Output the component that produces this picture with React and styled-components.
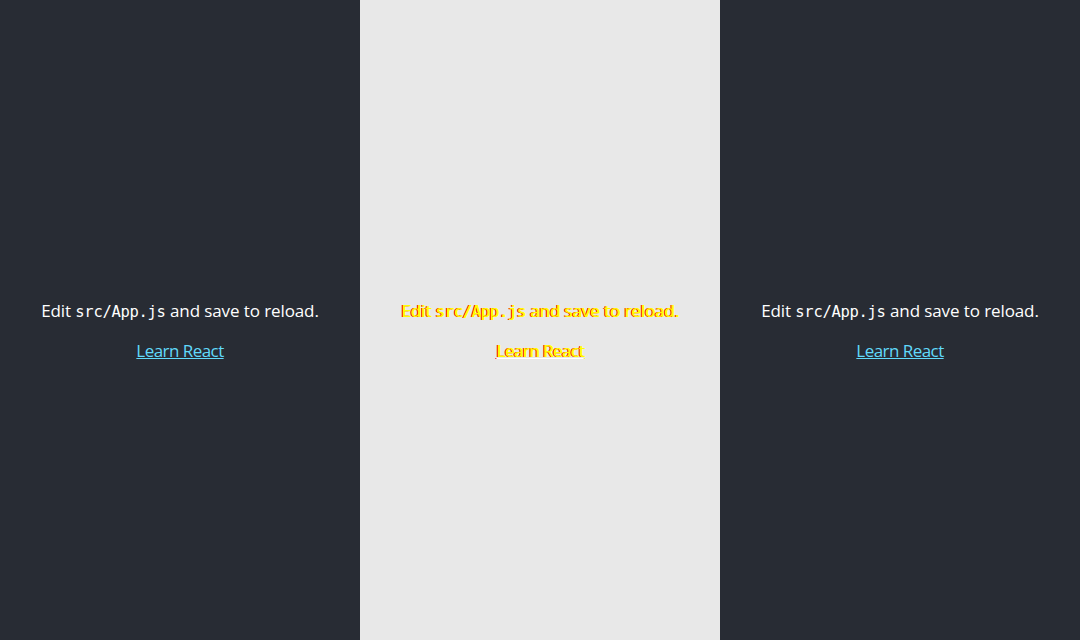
import React from 'react'
import styled, { createGlobalStyle } from 'styled-components'

const GlobalStyle = createGlobalStyle`
  html, body {
    margin: 0;
    padding: 0;
    height: 100%;
  }
  body {
    font-family: "Open Sans", "Noto Sans", Roboto, sans-serif;
    -webkit-font-smoothing: antialiased;
  }
  code {
    font-family: "DejaVu Sans Mono", "Liberation Mono", monospace;
  }
`

const Page = styled.div`
  display: grid;
  grid-template-columns: repeat(3, 360px);
  height: 640px;
  overflow: hidden;
`

const Header = styled.header`
  box-sizing: border-box;
  background-color: ${props => (props.diff ? '#e8e8e8' : '#282c34')};
  min-height: 640px;
  padding-top: 20px;
  display: flex;
  flex-direction: column;
  align-items: center;
  justify-content: center;
  font-size: 17px;
  color: ${props => (props.diff ? '#ffff00' : 'white')};
  text-shadow: ${props => (props.diff ? '-1px 0 #ff0000, 1px 0 #ffff00' : 'none')};
`

const Line = styled.p`
  margin: 0 0 17px;
  line-height: 23px;
  letter-spacing: -0.1px;
`

const Code = styled.code`
  font-size: 15.5px;
  letter-spacing: -0.3px;
`

const LearnLink = styled.a`
  color: ${props => (props.diff ? '#ffff00' : '#61dafb')};
  text-decoration-color: ${props => (props.diff ? '#ffffff' : '#61dafb')};
  line-height: 23px;
  letter-spacing: -0.55px;
  margin-top: -2px;
`

function Panel ({ diff }) {
  return (
    <Header diff={diff}>
      <Line>
        Edit <Code>src/App.js</Code> and save to reload.
      </Line>
      <LearnLink diff={diff} href='#' onClick={e => e.preventDefault()}>
        Learn React
      </LearnLink>
    </Header>
  )
}

export default function App () {
  return (
    <>
      <GlobalStyle />
      <Page>
        <Panel />
        <Panel diff />
        <Panel />
      </Page>
    </>
  )
}
